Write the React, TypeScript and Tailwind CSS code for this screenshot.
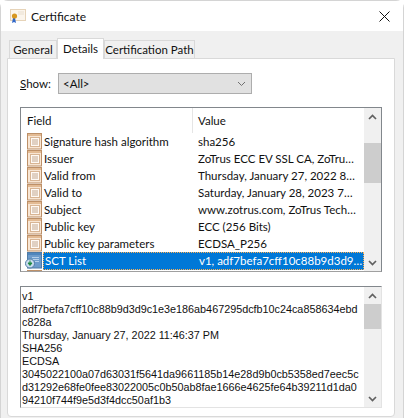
const rows: [string, string][] = [
  ["Signature hash algorithm", "sha256"],
  ["Issuer", "ZoTrus ECC EV SSL CA, ZoTru…"],
  ["Valid from", "Thursday, January 27, 2022 8…"],
  ["Valid to", "Saturday, January 28, 2023 7…"],
  ["Subject", "www.zotrus.com, ZoTrus Tech…"],
  ["Public key", "ECC (256 Bits)"],
  ["Public key parameters", "ECDSA_P256"],
];

const lines = [
  "v1",
  "adf7befa7cff10c88b9d3d9c1e3e186ab467295dcfb10c24ca858634ebd",
  "c828a",
  "Thursday, January 27, 2022 11:46:37 PM",
  "SHA256",
  "ECDSA",
  "3045022100a07d63031f5641da9661185b14e28d9b0cb5358ed7eec5c",
  "d31292e68fe0fee83022005c0b50ab8fae1666e4625fe64b39211d1da0",
  "94210f744f9e5d3f4dcc50af1b3",
];

function FieldIcon() {
  return (
    <svg width="15" height="17" viewBox="0 0 15 17" className="shrink-0">
      <rect x="0.5" y="0.5" width="14" height="15.5" fill="#f8e6d4" stroke="#bd9068" />
      <rect x="1" y="1" width="13" height="2" fill="#e3bb94" />
      <rect x="3.5" y="4.5" width="9" height="9" fill="#fffaf5" stroke="#d8b594" />
      <path d="M5 7h6M5 9h6M5 11h6" stroke="#c2a78f" />
    </svg>
  );
}

function SctIcon() {
  return (
    <svg width="17" height="17" viewBox="0 0 17 17" className="shrink-0">
      <rect x="2.5" y="0.5" width="14" height="15.5" fill="#6c9bcb" stroke="#4f7ba6" />
      <rect x="3" y="1" width="13" height="2" fill="#4f86bd" />
      <path d="M7 5.5h7M7 7.5h7M10 9.5h4" stroke="#b5d0ea" />
      <circle cx="5" cy="11.5" r="4.5" fill="#c9dcef" stroke="#4f7ba6" />
      <path d="M5 8.5v4M3 11l2 2.5 2-2.5z" stroke="#1f8a43" fill="#1f8a43" />
    </svg>
  );
}

function CertIcon() {
  return (
    <svg width="17" height="16" viewBox="0 0 17 16" className="shrink-0">
      <rect x="0.5" y="1.5" width="15" height="11" fill="#fbf5ec" stroke="#e6d3b8" />
      <path d="M8 4h6M8 6h6" stroke="#e9dfd0" />
      <path d="M3 10l-1 5 2-1 2 1-1-5z" fill="#2f66c8" />
      <circle cx="4.5" cy="8" r="2.6" fill="#d8971f" />
    </svg>
  );
}

function Chevron({ up, thin }: { up?: boolean; thin?: boolean }) {
  return (
    <svg width="9" height="6" viewBox="0 0 9 6">
      <path
        d={up ? "M1 5l3.5-3.5L8 5" : "M1 1l3.5 3.5L8 1"}
        fill="none"
        stroke={thin ? "#707070" : "#606060"}
        strokeWidth={thin ? "1" : "1.7"}
      />
    </svg>
  );
}

function ScrollBar({ thumbTop, thumbHeight }: { thumbTop: string; thumbHeight: string }) {
  return (
    <div className="flex w-[17px] shrink-0 flex-col bg-[#f0f0f0]">
      <div className="flex h-[17px] shrink-0 items-center justify-center"><Chevron up /></div>
      <div className="min-h-0 flex-1">
        <div className={`${thumbTop} ${thumbHeight} bg-[#cdcdcd]`} />
      </div>
      <div className="flex h-[17px] shrink-0 items-center justify-center"><Chevron /></div>
    </div>
  );
}

export default function App() {
  return (
    <div className="flex h-[418px] w-[404px] flex-col overflow-hidden bg-white font-['Lato',sans-serif] text-[11.5px] leading-[17px] text-[#111]">
      <div className="flex h-[418px] flex-col rounded-t-[8px] border border-b-0 border-[#d4d4d4]">
        <div className="flex h-[30px] shrink-0 items-center gap-[4px] bg-white pl-[9px] pr-[13px]">
          <CertIcon />
          <span className="flex-1 text-[12px]">Certificate</span>
          <svg width="11" height="11" viewBox="0 0 11 11">
            <path d="M.5.5l10 10M10.5.5l-10 10" stroke="#111" />
          </svg>
        </div>
        <div className="flex min-h-0 flex-1 flex-col bg-[#f0f0f0] pl-[6px] pr-[8px] pb-[1px] pt-[7px]">
          <div className="relative z-10 flex h-[20px] shrink-0 items-end whitespace-nowrap pl-[2px]">
            <div className="flex h-[18px] w-[48px] items-center justify-center border border-b-0 border-[#d9d9d9] bg-[#f0f0f0]">General</div>
            <div className="mb-[-1px] flex h-[21px] w-[47px] items-start justify-center border border-b-0 border-[#d9d9d9] bg-white pt-[1px]">Details</div>
            <div className="flex h-[18px] w-[91px] items-center justify-center border border-b-0 border-[#d9d9d9] bg-[#f0f0f0]">Certification Path</div>
          </div>
          <div className="flex min-h-0 flex-1 flex-col rounded-b-[4px] border border-[#d9d9d9] bg-white pl-[12px] pr-[12px] pt-[14px]">
            <div className="flex h-[21px] shrink-0 items-center">
              <span className="w-[38px]"><span className="underline">S</span>how:</span>
              <div className="flex h-[21px] w-[194px] items-center justify-between border border-[#adadad] bg-[#e1e1e1] pl-[4px] pr-[5px]">
                <span>&lt;All&gt;</span>
                <Chevron thin />
              </div>
            </div>
            <div className="mt-[13px] flex h-[165px] shrink-0 border border-[#82878c] border-b-[#a0a0a0]">
              <div className="flex min-w-0 flex-1 flex-col overflow-hidden">
                <div className="flex h-[25px] shrink-0 items-center">
                  <div className="h-[25px] w-[172px] shrink-0 border-r border-[#e5e5e5] pl-[6px] leading-[25px]">Field</div>
                  <div className="pl-[5px]">Value</div>
                </div>
                {rows.map(([f, v]) => (
                  <div key={f} className="flex h-[17px] shrink-0 items-center">
                    <div className="flex w-[177px] shrink-0 items-center gap-[2px] pl-[6px]">
                      <FieldIcon />
                      <span>{f}</span>
                    </div>
                    <span className="whitespace-nowrap">{v}</span>
                  </div>
                ))}
                <div className="flex h-[17px] shrink-0 items-center">
                  <div className="flex w-[22px] shrink-0 items-center pl-[4px]"><SctIcon /></div>
                  <div className="flex h-[18px] min-w-0 flex-1 items-center border border-dotted border-[#ffb050] bg-[#0078d7] text-white">
                    <span className="w-[155px] shrink-0 pl-[1px]">SCT List</span>
                    <span className="whitespace-nowrap">v1, adf7befa7cff10c88b9d3d9…</span>
                  </div>
                </div>
                <div className="flex h-[17px] shrink-0 items-start pl-[6px] pt-[1px]"><FieldIcon /></div>
              </div>
              <ScrollBar thumbTop="mt-[18px]" thumbHeight="h-[40px]" />
            </div>
            <div className="mt-[14px] flex h-[122px] shrink-0 border border-[#82878c] border-r-[#e3e3e3] border-b-[#e3e3e3]">
              <div className="min-w-0 flex-1 whitespace-nowrap pl-[1px] pt-[3px] font-['Liberation_Sans',sans-serif] text-[10.8px] leading-[13px]">
                {lines.map((l, i) => (
                  <div key={i}>{l}</div>
                ))}
              </div>
              <ScrollBar thumbTop="mt-[0px]" thumbHeight="h-[25px]" />
            </div>
          </div>
        </div>
      </div>
    </div>
  );
}
